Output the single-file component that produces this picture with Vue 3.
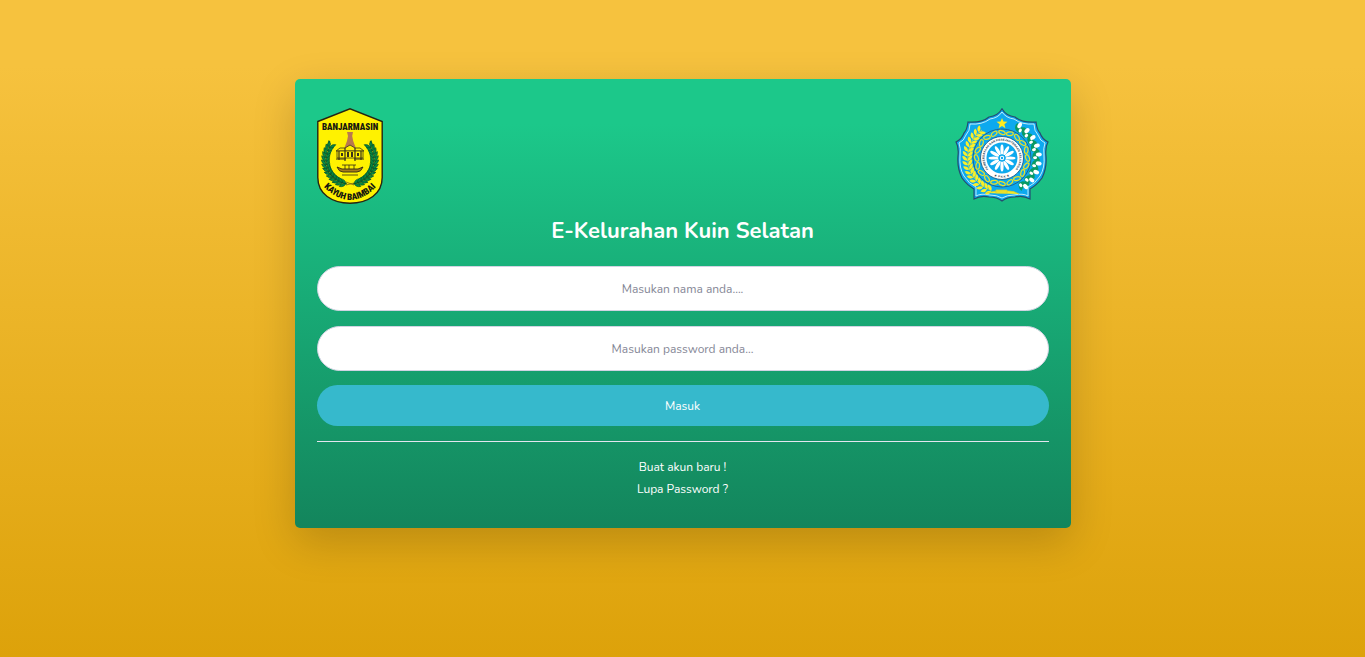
<script setup>
import { ref } from 'vue'

const nama = ref('')
const password = ref('')

const polar = (cx, cy, r, deg) => {
  const a = (deg * Math.PI) / 180
  return { x: +(cx + r * Math.cos(a)).toFixed(2), y: +(cy + r * Math.sin(a)).toFixed(2), deg }
}
const range = (n, from, step) => Array.from({ length: n }, (_, i) => from + i * step)

const petals = range(12, 0, 30)
const links = range(20, 0, 18).map((d) => polar(47, 50, 25.5, d))
const wheat = range(17, 108, 7.5).map((d) => polar(47, 50, 34.5, d))
const cotton = range(9, -60, 14).map((d) => polar(47, 50, 35, d))
const laurel = range(14, 100, 8.5).map((d) => polar(33, 52, 24, d))
</script>

<template>
  <main class="page">
    <section class="card">
      <header class="logos">
        <svg class="shield" viewBox="0 0 66 96" role="img" aria-label="Kota Banjarmasin">
          <path d="M.8 13.5 33 .8l32.2 12.7v56C65.200 86 51 95.200 33 95.200S.8 86 .8 69.500z" fill="#fff200" stroke="#252414" stroke-width="1.400" />
          <text class="shield-text" x="33" y="22" text-anchor="middle">BANJARMASIN</text>
          <path d="M30 24h6l-.8 4 1 5 3 8H27l3-8 1-5z" fill="#b9794f" />
          <g v-for="side in [1, -1]" :key="side" :transform="side === 1 ? '' : 'translate(66 0) scale(-1 1)'">
            <path d="M13 33C1 49 8 71 30 76" fill="none" stroke="#064d2b" stroke-width="1" />
            <g v-for="(p, i) in laurel" :key="i" :transform="`translate(${p.x} ${p.y}) rotate(${p.deg + 90})`">
              <path d="M0 0Q1-4 6-4Q5 0 0 0Q1 4 6 4Q5 0 0 0" fill="#078943" stroke="#064d2b" stroke-width=".6" />
            </g>
          </g>
          <path d="M19 43l4-3h5l5-3 5 3h5l4 3z" fill="#fff200" stroke="#39331a" stroke-width=".8" />
          <path d="M20 43h26v7H20z" fill="#fff200" stroke="#39331a" stroke-width=".8" />
          <path d="M22 43v9m6-12v13m10-13v13m6-10v9" stroke="#39331a" stroke-width="1.200" fill="none" />
          <path d="M24 45h2v3h-2zm6-1h2v5h-2zm4 0h2v5h-2zm6 1h2v3h-2z" fill="#39331a" />
          <path d="M19 51h10m8 0h10" stroke="#39331a" stroke-width="1" />
          <path d="M20 59q2 5 6 5h14q4 0 6-5l-5 2H25z" fill="#a47a1d" stroke="#302914" stroke-width=".9" />
          <path d="M25 57h14M28 57v4m4-4v4m5-4v4M25 67h16" fill="none" stroke="#302914" stroke-width=".8" />
          <path d="M29 77l8-2m-8-1 8 3" stroke="#695415" stroke-width=".7" />
          <path id="shield-arc" d="M5 77Q33 107 61 77" fill="none" />
          <text class="shield-text" text-anchor="middle"><textPath href="#shield-arc" startOffset="50%">KAYUH BAIMBAI</textPath></text>
        </svg>

        <svg class="emblem" viewBox="0 0 94 94" role="img" aria-label="PKK">
          <path
            d="M47 .8Q51 8 60 9Q67 15 81 14Q82 22 85 25Q87 31 93 34Q90 39 91 48Q92 60 87 70Q82 77 75 81L75 91Q68 87 60 89Q52 89 47 93Q42 89 34 89Q26 87 19 91L19 81Q12 77 7 70Q2 60 3 48Q4 39 1 34Q7 31 9 25Q12 22 13 14Q27 15 34 9Q43 8 47 .8z"
            fill="#0da9ee" stroke="#254c72" stroke-width="1.200" />
          <path
            d="M47 4Q51 10 59 11Q67 17 79 16Q79 23 83 27Q85 33 90 35Q88 40 89 48Q90 60 85 68Q80 76 73 79L73 88Q68 85 59 87Q52 87 47 90Q42 87 35 87Q26 85 21 88L21 79Q14 76 9 68Q4 60 5 48Q6 40 4 35Q9 33 11 27Q15 23 15 16Q27 17 35 11Q43 10 47 4z"
            fill="none" stroke="#d9f2fb" stroke-width=".9" />
          <path d="M47 10l1.500 3.600 4 .2-3.100 2.500 1 3.900-3.400-2.100-3.400 2.100 1-3.900-3.100-2.500 4-.2z" fill="#ffec1d" />
          <circle cx="47" cy="50" r="29" fill="#0da9ee" stroke="#235d83" stroke-width=".9" />
          <ellipse
            v-for="(p, i) in links" :key="`l${i}`" rx="3.400" ry="1.800" fill="none" stroke="#e6e02a" stroke-width="1.200"
            :transform="`translate(${p.x} ${p.y}) rotate(${p.deg + 90 + (i % 2 ? 22 : -22)})`" />
          <circle cx="47" cy="50" r="21.500" fill="#fff" stroke="#235d83" stroke-width=".9" />
          <circle cx="47" cy="50" r="15.500" fill="#0da9ee" />
          <ellipse v-for="d in petals" :key="`p${d}`" cx="47" cy="41.500" rx="1.600" ry="5" fill="#fff" :transform="`rotate(${d} 47 50)`" />
          <circle cx="47" cy="50" r="2.200" fill="#fff" />
          <circle cx="47" cy="50" r="1.200" fill="#0da9ee" />
          <path id="ring-top" d="M37 64.300A17.400 17.400 0 1 1 57 64.300" fill="none" />
          <text class="ring-text" text-anchor="middle"><textPath href="#ring-top" startOffset="50%">PEMBERDAYAAN DAN KESEJAHTERAAN KELUARGA</textPath></text>
          <path id="ring-bottom" d="M36 66.500Q47 73 58 66.500" fill="none" />
          <text class="ring-text" text-anchor="middle"><textPath href="#ring-bottom" startOffset="50%">★ P K K ★</textPath></text>
          <path d="M36 82A34 34 0 0 1 27 22" fill="none" stroke="#e4dd29" stroke-width=".8" />
          <g v-for="(p, i) in wheat" :key="`w${i}`" :transform="`translate(${p.x} ${p.y}) rotate(${p.deg + 90})`">
            <path d="M0 0Q0-5 5-5Q5-1 0 0Q0 5 5 5Q5 1 0 0" fill="#fbef28" />
          </g>
          <g v-for="(p, i) in cotton" :key="`c${i}`" :transform="`translate(${p.x} ${p.y}) rotate(${p.deg})`">
            <path d="M-4-2Q-1-6 3-4L1 1 3 5Q-2 6-5 2z" fill="#0a9a63" />
            <ellipse cx="2" cy="-1" rx="3" ry="2" fill="#fff" />
            <ellipse cx="-2" cy="2" rx="2" ry="1.500" fill="#fff" />
          </g>
          <path d="M31 85q9-2 12-2h11q5 0 10 3M41 82h11v3H41z" fill="#f7eb28" stroke="#d9ce2b" stroke-width=".8" />
        </svg>
      </header>

      <h1 class="title">E-Kelurahan Kuin Selatan</h1>

      <form class="form" @submit.prevent>
        <div class="fields">
          <input v-model="nama" class="field" type="text" aria-label="Nama" placeholder="Masukan nama anda...." />
          <input v-model="password" class="field" type="password" aria-label="Password" placeholder="Masukan password anda..." />
        </div>
        <button class="submit" type="submit">Masuk</button>
      </form>

      <hr class="rule" />

      <nav class="links">
        <a href="#daftar">Buat akun baru !</a>
        <a href="#lupa">Lupa Password ?</a>
      </nav>
    </section>
  </main>
</template>

<style>
body {
  margin: 0;
}
</style>

<style scoped>
.page {
  box-sizing: border-box;
  min-height: 100vh;
  padding: 79px 16px;
  background: linear-gradient(180deg, #f6c23e 10%, #dda20a 100%);
  font-family: Nunito, Lato, "Open Sans", sans-serif;
  font-size: 12px;
  line-height: 22px;
}

.card {
  box-sizing: border-box;
  max-width: 776px;
  margin: 0 auto;
  padding: 29px 22px 28px;
  border-radius: 5px;
  background: linear-gradient(180deg, #1cc88a 10%, #13855c 100%);
  box-shadow: 0 14px 43px rgba(0, 0, 0, 0.175);
}

.logos {
  display: flex;
  justify-content: space-between;
  align-items: flex-start;
}

.shield {
  display: block;
  width: 66px;
  height: 96px;
}

.emblem {
  display: block;
  width: 94px;
  height: 94px;
}

.shield-text {
  font-family: "Roboto Condensed", "Open Sans Condensed", Roboto, sans-serif;
  font-size: 9px;
  font-weight: 900;
  fill: #17170f;
}

.ring-text {
  font-family: "Liberation Sans", sans-serif;
  font-size: 3px;
  font-weight: 700;
  fill: #263c50;
}

.title {
  margin: 12px 0 20px;
  color: #fff;
  font-size: 22px;
  font-weight: 700;
  line-height: 30px;
  text-align: center;
}

.form {
  display: flex;
  flex-direction: column;
  gap: 14px;
}

.fields {
  display: flex;
  flex-direction: column;
  gap: 15px;
}

.field {
  box-sizing: border-box;
  width: 100%;
  height: 45px;
  padding: 0 14px;
  border: 1px solid #d1d3e2;
  border-radius: 23px;
  background: #fff;
  color: #6e707e;
  font: inherit;
  text-align: center;
}

.field::placeholder {
  color: #858796;
  opacity: 1;
}

.submit {
  height: 41px;
  border: 0;
  border-radius: 21px;
  background: #36b9cc;
  color: #fff;
  font: inherit;
  cursor: pointer;
}

.rule {
  margin: 15px 0 14px;
  border: 0;
  border-top: 1px solid #e3e6f0;
}

.links {
  display: flex;
  flex-direction: column;
  align-items: center;
}

.links a {
  color: #fff;
  text-decoration: none;
}
</style>
